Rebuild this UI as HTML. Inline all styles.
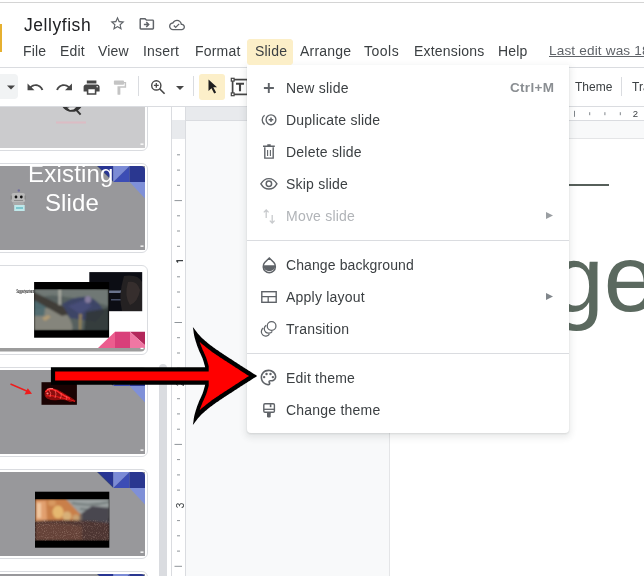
<!DOCTYPE html>
<html><head><meta charset="utf-8">
<style>
*{margin:0;padding:0;box-sizing:border-box}
html,body{width:644px;height:576px;overflow:hidden;background:#fff;font-family:"Liberation Sans",sans-serif;color:#3c4043;position:relative}
.a{position:absolute}
.t{position:absolute;white-space:nowrap;line-height:1;will-change:transform}
svg{position:absolute;overflow:visible}
.mb{font-size:14px;color:#3c4043;top:44.2px;letter-spacing:.2px}
.mi{font-size:14px;color:#3c4043;left:286px;letter-spacing:.22px}
.thumb{position:absolute;left:-3px;width:148px;height:84px;overflow:hidden}
.tb{position:absolute;left:-6px;width:154px;height:90px;border:1px solid #dadce0;border-radius:6px;background:#fff}
</style></head><body>
<!-- top chrome -->
<div class="a" style="left:0;top:2px;width:644px;height:1px;background:#d4d4d4"></div>
<div class="a" style="left:0;top:24px;width:2px;height:28px;background:#e6b030"></div>
<div class="t" style="left:24px;top:17px;font-size:17.5px;color:#202124;letter-spacing:.55px">Jellyfish</div>
<!-- star -->
<svg style="left:108.7px;top:15.4px" width="17" height="17" viewBox="0 0 24 24"><path fill="#5f6368" d="M22 9.24l-7.19-.62L12 2 9.19 8.63 2 9.24l5.46 4.73L5.82 21 12 17.270 18.18 21l-1.63-7.03L22 9.24zM12 15.4l-3.76 2.27 1-4.28-3.32-2.88 4.38-.38L12 6.1l1.71 4.04 4.38.38-3.32 2.88 1 4.28L12 15.4z"/></svg>
<!-- folder -->
<svg style="left:137.7px;top:15.2px" width="17.6" height="17.6" viewBox="0 0 24 24"><path fill="#5f6368" d="M20 6h-8l-2-2H4c-1.1 0-1.99.9-1.99 2L2 18c0 1.1.9 2 2 2h16c1.1 0 2-.9 2-2V8c0-1.1-.9-2-2-2zm0 12H4V6h5.17l2 2H20v10zm-7.84-6H8v2h4.16l-1.59 1.590L11.99 17 16 13.01 11.99 9l-1.42 1.41L12.16 12z"/></svg>
<!-- cloud -->
<svg style="left:168.9px;top:16.6px" width="16" height="16" viewBox="0 0 24 24"><path fill="#5f6368" d="M19.35 10.04C18.67 6.59 15.64 4 12 4 9.11 4 6.6 5.64 5.350 8.04 2.34 8.36 0 10.91 0 14c0 3.31 2.69 6 6 6h13c2.76 0 5-2.24 5-5 0-2.64-2.05-4.78-4.65-4.960zM19 18H6c-2.21 0-4-1.79-4-4 0-2.05 1.53-3.76 3.56-3.97l1.07-.11.5-.95C8.08 7.14 9.94 6 12 6c2.62 0 4.88 1.86 5.39 4.43l.3 1.5 1.53.11c1.56.1 2.78 1.41 2.78 2.96 0 1.65-1.35 3-3 3zm-9-3.82l-2.09-2.09L6.5 13.5 10 17l6.01-6.01-1.41-1.41z"/></svg>

<!-- menubar -->
<div class="a" style="left:247px;top:38.5px;width:46px;height:26px;background:#fcefc8;border-radius:4px"></div>
<div class="t mb" style="left:23px">File</div>
<div class="t mb" style="left:60px">Edit</div>
<div class="t mb" style="left:98px">View</div>
<div class="t mb" style="left:142.5px">Insert</div>
<div class="t mb" style="left:195px">Format</div>
<div class="t mb" style="left:254.5px">Slide</div>
<div class="t mb" style="left:300px">Arrange</div>
<div class="t mb" style="left:364px;letter-spacing:.5px">Tools</div>
<div class="t mb" style="left:414px">Extensions</div>
<div class="t mb" style="left:498px">Help</div>
<div class="t mb" style="left:548.5px;top:44px;font-size:13.6px;letter-spacing:.15px;color:#5f6368;text-decoration:underline;text-underline-offset:1px">Last edit was 18</div>
<div class="a" style="left:0;top:67px;width:644px;height:1px;background:#dadce0"></div>

<!-- toolbar -->
<div class="a" style="left:-10px;top:74px;width:28px;height:25px;background:#f1f3f4;border-radius:4px"></div>
<svg style="left:7px;top:85px" width="8" height="5" viewBox="0 0 10 5"><path fill="#444" d="M0 0h10L5 5z"/></svg>
<svg style="left:26.4px;top:77.6px" width="18.5" height="18.5" viewBox="0 0 24 24"><path fill="#474747" d="M12.5 8c-2.65 0-5.05.99-6.9 2.6L2 7v9h9l-3.62-3.62c1.39-1.16 3.16-1.88 5.12-1.88 3.54 0 6.55 2.31 7.6 5.5l2.37-.78C21.08 11.03 17.15 8 12.5 8z"/></svg>
<svg style="left:55.1px;top:77.6px" width="18.5" height="18.5" viewBox="0 0 24 24"><path fill="#474747" d="M18.4 10.6C16.55 8.99 14.15 8 11.5 8c-4.65 0-8.580 3.03-9.96 7.22L3.9 16c1.05-3.19 4.05-5.5 7.6-5.5 1.95 0 3.73.72 5.12 1.88L13 16h9V7l-3.6 3.6z"/></svg>
<svg style="left:82.3px;top:77.5px" width="19.2" height="19.2" viewBox="0 0 24 24"><path fill="#474747" d="M19 8H5c-1.66 0-3 1.34-3 3v6h4v4h12v-4h4v-6c0-1.66-1.34-3-3-3zm-3 11H8v-5h8v5zm3-7c-.55 0-1-.45-1-1s.45-1 1-1 1 .45 1 1-.45 1-1 1zm-1-9H6v4h12V3z"/></svg>
<svg style="left:111px;top:78.5px" width="17.3" height="17.3" viewBox="0 0 24 24"><path fill="#c4c4c4" d="M18 4V3c0-.55-.45-1-1-1H5c-.55 0-1 .45-1 1v4c0 .55.45 1 1 1h12c.55 0 1-.45 1-1V6h1v4H9v11c0 .55.45 1 1 1h2c.55 0 1-.45 1-1v-9h8V4h-3z"/></svg>
<div class="a" style="left:138px;top:76px;width:1px;height:20px;background:#dadce0"></div>
<svg style="left:148px;top:77px" width="20" height="20" viewBox="0 0 20 20"><circle cx="8.3" cy="8.4" r="4.6" fill="none" stroke="#474747" stroke-width="1.4"/><path d="M11.6 11.7l5 5" stroke="#474747" stroke-width="1.6"/><path d="M8.3 6v4.8M5.9 8.4h4.8" stroke="#474747" stroke-width="1.3"/></svg>
<svg style="left:176px;top:86px" width="8" height="4" viewBox="0 0 10 5"><path fill="#474747" d="M0 0h10L5 5z"/></svg>
<div class="a" style="left:193px;top:76px;width:1px;height:20px;background:#dadce0"></div>
<div class="a" style="left:199px;top:74px;width:25.5px;height:26px;background:#fcefc9;border-radius:3px"></div>
<svg style="left:207.5px;top:79px" width="10" height="15" viewBox="0 0 10 15"><path fill="#1f1f1f" d="M0.5 0.5L9 8.3H5.3l2.8 5.2-1.9 1-2.7-5.3L0.5 12z"/></svg>
<svg style="left:231px;top:78px" width="18" height="18" viewBox="0 0 18 18"><rect x="1.6" y="1.6" width="15" height="14.8" fill="none" stroke="#444" stroke-width="1.7"/><rect x="0.3" y="0.3" width="2.8" height="2.8" fill="#fff" stroke="#444" stroke-width="1.2"/><rect x="0.3" y="14.9" width="2.8" height="2.8" fill="#fff" stroke="#444" stroke-width="1.2"/><path d="M5 5.8h8M9 5.8v7.4" stroke="#444" stroke-width="2.1"/></svg>
<div class="t" style="left:574.5px;top:81px;font-size:12px;color:#3c4043">Theme</div>
<div class="a" style="left:621px;top:77px;width:1px;height:19px;background:#dadce0"></div>
<div class="t" style="left:632px;top:81px;font-size:12px;color:#3c4043">Transition</div>
<div class="a" style="left:0;top:106px;width:644px;height:1px;background:#dadce0"></div>

<!-- ruler + canvas -->
<div class="a" style="left:185px;top:107px;width:459px;height:469px;background:#f8f9fa"></div>
<div class="a" style="left:185px;top:107px;width:459px;height:14px;background:#e8eaed"></div>
<div class="a" style="left:390px;top:107px;width:254px;height:14px;background:#fff"></div>
<div class="a" style="left:185px;top:120px;width:459px;height:1px;background:#dadce0"></div>
<div class="a" style="left:390px;top:139px;width:254px;height:437px;background:#fff"></div>
<div class="a" style="left:389px;top:139px;width:1px;height:437px;background:#e4e5e7"></div>
<div class="a" style="left:389px;top:138px;width:255px;height:1px;background:#e4e5e7"></div>
<!-- vertical ruler -->
<div class="a" style="left:171px;top:107px;width:1px;height:469px;background:#dadce0"></div>
<div class="a" style="left:185px;top:107px;width:1px;height:469px;background:#dadce0"></div>
<div class="a" style="left:172px;top:107px;width:13px;height:13px;background:#fff"></div>
<div class="a" style="left:172px;top:120px;width:13px;height:19px;background:#e8eaed"></div>
<div class="a" style="left:172px;top:139px;width:13px;height:437px;background:#fff"></div>
<svg style="left:0;top:0" width="644" height="576" viewBox="0 0 644 576"><rect x="177" y="154.3" width="3" height="1" fill="#8f959a"/><rect x="177" y="169.6" width="3" height="1" fill="#8f959a"/><rect x="177" y="184.8" width="3" height="1" fill="#8f959a"/><rect x="174.5" y="200.1" width="7.5" height="1" fill="#8f959a"/><rect x="177" y="215.3" width="3" height="1" fill="#8f959a"/><rect x="177" y="230.5" width="3" height="1" fill="#8f959a"/><rect x="177" y="245.8" width="3" height="1" fill="#8f959a"/><path d="M176.3 260.6H183M176.5 260.6L178 262.5" stroke="#3c4043" stroke-width="1.25" fill="none"/><rect x="177" y="276.3" width="3" height="1" fill="#8f959a"/><rect x="177" y="291.5" width="3" height="1" fill="#8f959a"/><rect x="177" y="306.7" width="3" height="1" fill="#8f959a"/><rect x="174.5" y="322.0" width="7.5" height="1" fill="#8f959a"/><rect x="177" y="337.2" width="3" height="1" fill="#8f959a"/><rect x="177" y="352.5" width="3" height="1" fill="#8f959a"/><rect x="177" y="367.7" width="3" height="1" fill="#8f959a"/><text x="0" y="0" font-family="Liberation Sans" font-size="10" fill="#3c4043" transform="translate(183.9,383.4) rotate(-90)" text-anchor="middle">2</text><rect x="177" y="398.2" width="3" height="1" fill="#8f959a"/><rect x="177" y="413.4" width="3" height="1" fill="#8f959a"/><rect x="177" y="428.7" width="3" height="1" fill="#8f959a"/><rect x="174.5" y="443.9" width="7.5" height="1" fill="#8f959a"/><rect x="177" y="459.1" width="3" height="1" fill="#8f959a"/><rect x="177" y="474.4" width="3" height="1" fill="#8f959a"/><rect x="177" y="489.6" width="3" height="1" fill="#8f959a"/><text x="0" y="0" font-family="Liberation Sans" font-size="10" fill="#3c4043" transform="translate(183.9,505.4) rotate(-90)" text-anchor="middle">3</text><rect x="177" y="520.1" width="3" height="1" fill="#8f959a"/><rect x="177" y="535.3" width="3" height="1" fill="#8f959a"/><rect x="177" y="550.6" width="3" height="1" fill="#8f959a"/><rect x="174.5" y="565.8" width="7.5" height="1" fill="#8f959a"/><rect x="574" y="110.8" width="1" height="6" fill="#80868b"/><rect x="589.2" y="112.2" width="1" height="3" fill="#80868b"/><rect x="604.4" y="112.2" width="1" height="3" fill="#80868b"/><rect x="619.8" y="112.2" width="1" height="3" fill="#80868b"/><text x="635.5" y="117" font-family="Liberation Sans" font-size="9.5" fill="#3c4043" text-anchor="middle">2</text></svg>

<!-- slide content -->
<div class="a" style="left:560px;top:184px;width:48.5px;height:2px;background:#565f5a"></div>
<div class="t" style="left:551px;top:231px;font-size:95px;line-height:1;color:#5b695f">ge</div>

<!-- filmstrip -->
<div class="a" style="left:0;top:107px;width:171px;height:469px;overflow:hidden">
<div class="tb" style="top:-46px"></div>
<div class="thumb" style="top:-43px;background:#cbcbcd"></div>
<div class="tb" style="top:56px"></div>
<div class="thumb" style="top:59px;background:#98989b"></div>
<div class="tb" style="top:158px"></div>
<div class="thumb" style="top:161px;background:#fff"></div>
<div class="tb" style="top:260px"></div>
<div class="thumb" style="top:263px;background:#98989b"></div>
<div class="tb" style="top:362px"></div>
<div class="thumb" style="top:365px;background:#98989b"></div>
<div class="tb" style="top:464px"></div>
<div class="thumb" style="top:467px;background:#98989b"></div>
<div class="a" style="left:159px;top:257px;width:8px;height:230px;background:#dadce0;border-radius:4px"></div>
<svg style="left:0;top:0" width="171" height="469" viewBox="0 107 171 469">
<defs>
<clipPath id="c1"><rect x="-3" y="64" width="148" height="83.5" rx="4"/><rect x="-3" y="166" width="148" height="83.5" rx="4"/><rect x="-3" y="268" width="148" height="83.5" rx="4"/><rect x="-3" y="370" width="148" height="83.5" rx="4"/><rect x="-3" y="472" width="148" height="83.5" rx="4"/><rect x="-3" y="574" width="148" height="83.5" rx="4"/></clipPath>
<linearGradient id="th" x1="0" y1="0" x2="1" y2="1"><stop offset="0" stop-color="#5d6a66"/><stop offset=".35" stop-color="#4a5560"/><stop offset=".6" stop-color="#3f4666"/><stop offset="1" stop-color="#3b3a33"/></linearGradient>
<linearGradient id="bt" x1="0" y1="0" x2="1" y2="0"><stop offset="0" stop-color="#c98a5a"/><stop offset=".3" stop-color="#b97a4f"/><stop offset=".55" stop-color="#75685e"/><stop offset="1" stop-color="#6d6e70"/></linearGradient>
<linearGradient id="bt2" x1="0" y1="0" x2="0" y2="1"><stop offset="0" stop-color="#000" stop-opacity="0"/><stop offset=".45" stop-color="#000" stop-opacity="0"/><stop offset=".6" stop-color="#3a2a22" stop-opacity=".8"/><stop offset="1" stop-color="#2a1e1a" stop-opacity=".95"/></linearGradient>
<filter id="bl" x="-10%" y="-10%" width="120%" height="120%"><feGaussianBlur stdDeviation="0.9"/></filter><filter id="bl2" x="-20%" y="-20%" width="140%" height="140%"><feGaussianBlur stdDeviation="0.5"/></filter><filter id="noise" x="0" y="0" width="100%" height="100%"><feTurbulence type="fractalNoise" baseFrequency="0.9" numOctaves="2" seed="3"/><feColorMatrix values="0 0 0 0 0.85  0 0 0 0 0.65  0 0 0 0 0.55  0 0 0 2.2 -1.1"/></filter></defs>
<g clip-path="url(#c1)">
<!-- thumb1 -->
<circle cx="72" cy="100.3" r="9.8" fill="none" stroke="#353535" stroke-width="3.4"/><path d="M67 107.5Q71 108.5 76 107.5 74 110 70 110Z" fill="#e8e8e8"/><path d="M75.5 109L80.6 114.6" stroke="#333" stroke-width="1.9"/>
<rect x="56" y="121.5" width="30" height="2" fill="#dcbcc4"/>
<!-- thumb2 -->
<path fill="#3a4a74" d="M97 166H113.3V182Z"/><path fill="#283593" d="M98 166H113.3V181Z"/>
<path fill="#7b8bd6" d="M113.3 166H129.6L113.3 182Z"/><path fill="#3c4db5" d="M129.6 166V182H113.3Z"/>
<rect fill="#2a3790" x="129.6" y="166" width="20" height="16"/>
<path fill="#7f90d8" d="M129.6 182H150V204Z"/>
<text x="28" y="182" font-family="Liberation Sans" font-size="24" fill="#fff" letter-spacing=".2">Existing</text>
<text x="45" y="211.2" font-family="Liberation Sans" font-size="24" fill="#fff" letter-spacing=".1">Slide</text>
<rect x="18.3" y="189" width="1" height="3" fill="#9a9aa8"/><circle cx="18.8" cy="190.5" r="1.2" fill="#6f6c9a"/>
<rect x="11.5" y="193" width="13.5" height="9.5" rx="2" fill="#b9b9b9"/>
<rect x="10.5" y="195.5" width="1.5" height="4" fill="#8a8a8a"/><rect x="24.5" y="195.5" width="1.5" height="4" fill="#8a8a8a"/>
<circle cx="16" cy="197" r="1.4" fill="#111"/><circle cx="21.3" cy="197" r="1.4" fill="#111"/>
<rect x="14" y="200" width="9" height="1" fill="#8d8d8d"/>
<rect x="13" y="203" width="11" height="2" fill="#aaa"/>
<rect x="14.2" y="205" width="10.5" height="6" fill="#bfe8ea"/><rect x="16" y="207" width="7" height="2" fill="#7ec7cf"/>
<!-- thumb3 -->
<rect x="89.3" y="272.1" width="52.9" height="39.1" fill="#0c0d14"/>
<path fill="#8a95b5" d="M108 290.5h12l6-2 1 1.5-7 3H108z" opacity=".75"/>
<path fill="#56607c" d="M111 299h10v1.5h-10z" opacity=".8"/>
<path d="M124 276Q138 274 142 282V311H122Q118 296 124 276Z" fill="#242122"/>
<path d="M128 282Q137 280 140 290 138 302 130 305Q124 296 128 282Z" fill="#3e3532" opacity=".7"/>
<rect x="34.1" y="282" width="75" height="55.7" fill="#000"/>
<clipPath id="tc"><rect x="34.1" y="289" width="74.5" height="41.6"/></clipPath><g clip-path="url(#tc)"><g filter="url(#bl)"><rect x="34.1" y="289" width="74.5" height="41.6" fill="#56615f"/>
<path d="M34.1 289H108.6V306Q90 300 60 296 45 294 34.1 300Z" fill="#737c78" opacity=".85"/>
<path d="M34.1 310Q50 304 68 316 74 325 72 330.6H34.1Z" fill="#8b8a7e" opacity=".9"/>
<path d="M34.1 300Q40 298 46 303L44 316 34.1 316Z" fill="#4c6a70" opacity=".9"/>
<path d="M34.1 292L66 308 70 314 62 316 34.1 300Z" fill="#413c38"/>
<rect x="58.5" y="289" width="2.5" height="16" fill="#b8b6ad" opacity=".8"/>
<path d="M62 304Q75 295 90 297 100 302 104 312L96 322 70 318Z" fill="#3e4566"/>
<path d="M68 306L84 300 92 306 80 314Z" fill="#4b5180" opacity=".7"/>
<ellipse cx="88" cy="299.5" rx="3.2" ry="3.5" fill="#857c9e"/>
<path d="M86 312L108.6 308V330.6H84Z" fill="#2e3533" opacity=".8"/>
<path d="M79 314l3 0 -1 16h-2z" fill="#a58d58" opacity=".8"/>
<path d="M42 318l6-3 3 2-6 4z" fill="#c5a470" opacity=".7"/>
</g></g>
<text x="16.5" y="293.2" font-family="Liberation Sans" font-size="4.6" font-weight="bold" fill="#111" textLength="17.5" lengthAdjust="spacingAndGlyphs">Suggestyourteam</text>
<path fill="#ec5d8e" d="M98 348L115 331.7V348Z"/>
<rect x="115" y="331.7" width="15" height="16.3" fill="#d9407a"/>
<path fill="#b2275a" d="M130 331.7H148V348Z"/><path fill="#ef77a3" d="M130 331.7L148 348H130Z"/>
<rect x="-3" y="348" width="151" height="5" fill="#9c9c9c"/>
<!-- thumb4 -->
<path fill="#3a4a74" d="M97 370H113.3V386Z"/><path fill="#283593" d="M98 370H113.3V385Z"/>
<path fill="#7b8bd6" d="M113.3 370H129.6L113.3 386Z"/><path fill="#3c4db5" d="M129.6 370V386H113.3Z"/>
<rect fill="#2a3790" x="129.6" y="370" width="20" height="16"/>
<path fill="#7f90d8" d="M129.6 386H150V408Z"/>
<rect x="41.5" y="382.2" width="35.4" height="22.6" fill="#1a0303"/>
<g filter="url(#bl2)">
<path d="M44.5 393Q46 387 52 388Q58 389 62 392Q67 395 72 398L76 401 70 402Q64 399 58 400Q52 401 48 399Q44 397 44.5 393Z" fill="#8a0a0a"/>
<path d="M45.5 392Q48 388.5 53 389.5Q57 390.5 60 393Q64 396 70 398.5" stroke="#ff2a2a" stroke-width="1.6" fill="none"/>
<path d="M46 396Q51 395 56 396.5Q62 398 67 399Q72 400 75 401.5" stroke="#e61a1a" stroke-width="1.1" fill="none"/>
<path d="M49 390Q52 393 50 397M55 390Q57 394 55 398M61 393Q62 396 60 399M66 396Q68 398 66 400" stroke="#ff5a5a" stroke-width=".8" fill="none"/>
<path d="M47 389.5Q50 388 53 388.5" stroke="#ff9090" stroke-width=".8" fill="none"/>
<circle cx="47.5" cy="393.5" r="1.1" fill="#ff8080"/>
</g>
<path d="M10.5 384L29 392" stroke="#ee1c1c" stroke-width="1.4"/><path d="M32 393.8L24.5 394.5 27.8 388.3Z" fill="#ee1c1c"/>
<!-- thumb5 -->
<path fill="#3a4a74" d="M97 472H113.3V488Z"/><path fill="#283593" d="M98 472H113.3V487Z"/>
<path fill="#7b8bd6" d="M113.3 472H129.6L113.3 488Z"/><path fill="#3c4db5" d="M129.6 472V488H113.3Z"/>
<rect fill="#2a3790" x="129.6" y="472" width="20" height="16"/>
<path fill="#7f90d8" d="M129.6 488H150V510Z"/>
<rect x="35" y="491.7" width="74.3" height="56" fill="#000"/>
<clipPath id="bc"><rect x="35" y="499" width="74.3" height="41.8"/></clipPath>
<g clip-path="url(#bc)"><g filter="url(#bl)">
<rect x="35" y="499" width="74.3" height="41.8" fill="#7a6a60"/>
<path d="M60 499H109.3V518Q90 512 65 514Z" fill="#9aa0a0"/>
<path d="M72 503Q90 507 109 502M80 509Q95 511 109 508" stroke="#66706f" stroke-width="1.6" fill="none"/>
<path d="M35 499H66L80 514 76 524H35Z" fill="#c97f4a"/>
<path d="M36 501H46L47 522H36Z" fill="#e2a070"/>
<rect x="37" y="503" width="4" height="15" fill="#f0c8a0"/>
<ellipse cx="58" cy="512" rx="5.5" ry="6.5" fill="#e6b870"/>
<ellipse cx="52" cy="503" rx="4" ry="3" fill="#d89860"/>
<ellipse cx="67" cy="516" rx="4.5" ry="4.5" fill="#d8b078"/>
<ellipse cx="76" cy="518" rx="3.5" ry="3.5" fill="#c9a070"/>
<path d="M82 513L92 506 109.3 508V524H82Z" fill="#4a4750"/>
<path d="M35 521Q70 518 109.3 523V540.8H35Z" fill="#4e3631"/>
<path d="M35 524Q60 521 82 526V540.8H35Z" fill="#654338"/>
</g>
<rect x="35" y="520" width="74.3" height="20.8" filter="url(#noise)" opacity=".35"/>
</g>
<!-- thumb6 -->
<path fill="#3a4a74" d="M97 574H113.3V590Z"/><path fill="#283593" d="M98 574H113.3V589Z"/>
<path fill="#7b8bd6" d="M113.3 574H129.6L113.3 590Z"/><path fill="#3c4db5" d="M129.6 574V590H113.3Z"/>
<rect fill="#2a3790" x="129.6" y="574" width="20" height="16"/>
<path fill="#7f90d8" d="M129.6 590H150V612Z"/>
</g>
<rect x="140.5" y="245.5" width="3" height="1.3" fill="#fff"/><rect x="140.5" y="449.5" width="3" height="1.3" fill="#fff"/><rect x="140.5" y="551.5" width="3" height="1.3" fill="#fff"/><rect x="140.5" y="143.5" width="3" height="1.3" fill="#fff"/><rect x="140.5" y="347.8" width="3" height="1.3" fill="#fff"/>
</svg>
</div>

<!-- menu -->
<div class="a" style="left:247px;top:65px;width:322px;height:368px;background:#fff;border-radius:0 0 4px 4px;box-shadow:0 3px 6px 2px rgba(60,64,67,.10),0 1px 2px rgba(60,64,67,.12)"></div>
<div class="a" style="left:247px;top:38.5px;width:46px;height:26px;background:#fcefc8;border-radius:4px"></div>
<div class="t mb" style="left:254.5px">Slide</div>
<div class="t mi" style="top:80.5px">New slide</div>
<div class="t" style="left:509.5px;top:81px;font-size:13.5px;font-weight:bold;color:#8a8e92;letter-spacing:.3px">Ctrl+M</div>
<div class="t mi" style="top:112.5px">Duplicate slide</div>
<div class="t mi" style="top:144.5px">Delete slide</div>
<div class="t mi" style="top:176.5px">Skip slide</div>
<div class="t mi" style="top:208.5px;color:#b1b4b8">Move slide</div>
<svg style="left:546px;top:212px" width="7" height="7" viewBox="0 0 7 7"><path fill="#9a9ea2" d="M0 0L7 3.5 0 7z"/></svg>
<div class="a" style="left:247px;top:240px;width:322px;height:1px;background:#dadce0"></div>
<div class="t mi" style="top:257.5px;letter-spacing:.1px">Change background</div>
<div class="t mi" style="top:289.5px">Apply layout</div>
<svg style="left:546px;top:293px" width="7" height="7" viewBox="0 0 7 7"><path fill="#80868b" d="M0 0L7 3.5 0 7z"/></svg>
<div class="t mi" style="top:321.5px">Transition</div>
<div class="a" style="left:247px;top:353px;width:322px;height:1px;background:#dadce0"></div>
<div class="t mi" style="top:370.5px">Edit theme</div>
<div class="t mi" style="top:402.5px">Change theme</div>
<svg style="left:0;top:0" width="644" height="576" viewBox="0 0 644 576">
<g fill="none" stroke="#5f6368" stroke-width="1.5">
<path d="M263.9 88h10M268.8 83v10" stroke-width="1.9"/>
<circle cx="271" cy="119.8" r="4.9" stroke-width="1.35"/>
<path d="M271 117.5v4.6M268.7 119.8h4.6" stroke-width="1.5"/>
<path d="M264.6 115.2A5.8 5.8 0 0 0 264.6 124.6" stroke-width="1.3"/>
<path d="M263 146.3h11.8M267.3 145h3.4" stroke-width="1.5"/>
<path d="M264.8 147.2v10.9h8.4v-10.9" stroke-width="1.4"/>
<path d="M267.6 150v6M270.4 150v6" stroke-width="1.1"/>
<path d="M260.9 183.8C263.2 179.8 265.8 178.6 268.9 178.6C272 178.6 274.6 179.8 276.9 183.8C274.6 187.8 272 189 268.9 189C265.8 189 263.2 187.8 260.9 183.8Z" stroke-width="1.45"/>
<circle cx="268.9" cy="183.8" r="2.7" stroke-width="1.5"/>
<path d="M262 257.9L264.3 262.6" stroke="none"/>
<path d="M269.3 258L264.7 262.6A6.1 6.1 0 1 0 273.9 262.6Z" stroke-width="1.45"/>
<path d="M263.3 265.2H275.3A6 6 0 0 1 263.3 265.2Z" fill="#5f6368" stroke="none"/>
<rect x="261.8" y="291.7" width="14.4" height="10.6" stroke-width="1.4"/>
<path d="M261.8 296.6h14.4M268.2 296.6v5.7" stroke-width="1.3"/>
<circle cx="271.6" cy="325.9" r="4.35" stroke-width="1.25"/>
<path d="M266.18 325.2A4.4 4.4 0 1 0 272.3 331.3" stroke-width="1.25"/>
<path d="M263.28 328.1A4.4 4.4 0 1 0 269.4 334.2" stroke-width="1.25"/>
<rect x="263.8" y="403.7" width="10.6" height="8.5" rx="1.2" stroke-width="1.4"/>
<path d="M263.8 409.3h10.6" stroke-width="1.3"/>
<path d="M270.6 404.2v3" stroke-width="1.6"/>
</g>
<g fill="#5f6368">
<rect x="267" y="412" width="3.7" height="5.6" rx="1.3"/>
</g>
<g fill="none" stroke="#c8cacd" stroke-width="1.3">
<path d="M266.2 210v8M263.8 212.4l2.4-2.4 2.4 2.4M272.2 215v8M269.8 220.6l2.4 2.4 2.4-2.4"/>
</g>
</svg>
<svg style="left:259.4px;top:368.3px" width="19" height="19" viewBox="0 0 24 24"><path fill="#5f6368" d="M12 22C6.49 22 2 17.51 2 12S6.49 2 12 2s10 4.04 10 9c0 3.31-2.69 6-6 6h-1.770c-.28 0-.5.22-.5.5 0 .12.05.23.13.33.41.47.64 1.06.64 1.67 0 1.38-1.12 2.5-2.5 2.5zm0-18c-4.41 0-8 3.59-8 8s3.59 8 8 8c.28 0 .5-.22.5-.5 0-.16-.08-.28-.14-.35-.41-.46-.63-1.05-.63-1.65 0-1.38 1.12-2.5 2.5-2.5H16c2.21 0 4-1.79 4-4 0-3.86-3.59-7-8-7z"/><circle fill="#5f6368" cx="6.5" cy="11.5" r="1.5"/><circle fill="#5f6368" cx="9.5" cy="7.5" r="1.5"/><circle fill="#5f6368" cx="14.5" cy="7.5" r="1.5"/><circle fill="#5f6368" cx="17.5" cy="11.5" r="1.5"/></svg>
<svg style="left:0;top:0" width="644" height="576" viewBox="0 0 644 576"><path d="M50.9 367.2 L205.2 367.2 L205.0 366.5 L204.8 365.8 L204.6 365.1 L204.4 364.4 L204.2 363.7 L204.0 363.0 L203.8 362.3 L203.6 361.6 L203.4 360.9 L203.2 360.2 L202.9 359.4 L202.6 358.6 L202.3 357.8 L201.9 356.9 L201.5 356.0 L201.1 355.1 L200.7 354.2 L200.3 353.3 L199.9 352.4 L199.4 351.4 L199.0 350.5 L198.6 349.5 L198.3 348.6 L197.9 347.7 L197.6 346.8 L197.2 345.9 L196.9 345.0 L196.6 344.1 L196.3 343.1 L196.0 342.2 L195.7 341.3 L195.5 340.4 L195.2 339.5 L194.9 338.6 L194.7 337.8 L194.5 336.9 L194.3 336.0 L194.1 335.2 L194.0 334.4 L193.8 333.6 L193.7 332.7 L193.6 331.9 L193.5 331.1 L193.4 330.3 L193.3 329.5 L193.1 328.7 L193.0 327.9 L192.9 327.1 L193.6 327.9 L194.2 328.7 L194.8 329.6 L195.5 330.4 L196.1 331.2 L196.7 332.0 L197.4 332.9 L198.0 333.7 L198.7 334.5 L199.4 335.3 L200.1 336.1 L200.9 336.9 L201.7 337.7 L202.5 338.5 L203.4 339.3 L204.3 340.1 L205.2 340.9 L206.1 341.6 L207.1 342.4 L208.0 343.2 L208.9 343.9 L209.9 344.7 L210.8 345.4 L211.7 346.1 L212.6 346.8 L213.5 347.5 L214.4 348.1 L215.3 348.8 L216.2 349.4 L217.1 350.0 L218.1 350.6 L219.0 351.3 L219.9 351.9 L220.8 352.5 L221.7 353.1 L222.6 353.7 L223.5 354.3 L224.4 354.9 L225.3 355.5 L226.2 356.1 L227.1 356.7 L228.1 357.3 L229.0 357.9 L229.9 358.5 L230.8 359.0 L231.7 359.6 L232.6 360.2 L233.5 360.8 L234.4 361.4 L235.3 362.0 L236.2 362.5 L237.0 363.1 L237.9 363.7 L238.8 364.2 L239.7 364.8 L240.5 365.4 L241.5 366.0 L242.4 366.6 L243.3 367.2 L244.3 367.8 L245.3 368.4 L246.3 369.1 L247.4 369.8 L248.4 370.4 L249.5 371.1 L250.6 371.8 L251.7 372.5 L252.8 373.2 L253.9 373.9 L255.0 374.6 L256.1 375.3 L257.2 376.0 L256.1 376.7 L255.0 377.4 L253.9 378.1 L252.8 378.8 L251.7 379.5 L250.6 380.2 L249.5 380.9 L248.4 381.6 L247.4 382.2 L246.3 382.9 L245.3 383.6 L244.3 384.2 L243.3 384.8 L242.4 385.4 L241.5 386.0 L240.5 386.6 L239.7 387.2 L238.8 387.8 L237.9 388.3 L237.0 388.9 L236.2 389.5 L235.3 390.0 L234.4 390.6 L233.5 391.2 L232.6 391.8 L231.7 392.4 L230.8 393.0 L229.9 393.5 L229.0 394.1 L228.1 394.7 L227.1 395.3 L226.2 395.9 L225.3 396.5 L224.4 397.1 L223.5 397.7 L222.6 398.3 L221.7 398.9 L220.8 399.5 L219.9 400.1 L219.0 400.7 L218.1 401.4 L217.1 402.0 L216.2 402.6 L215.3 403.2 L214.4 403.9 L213.5 404.5 L212.6 405.2 L211.7 405.9 L210.8 406.6 L209.9 407.3 L208.9 408.1 L208.0 408.8 L207.1 409.6 L206.1 410.4 L205.2 411.1 L204.3 411.9 L203.4 412.7 L202.5 413.5 L201.7 414.3 L200.9 415.1 L200.1 415.9 L199.4 416.7 L198.7 417.5 L198.0 418.3 L197.4 419.1 L196.7 420.0 L196.1 420.8 L195.5 421.6 L194.8 422.4 L194.2 423.3 L193.6 424.1 L192.9 424.9 L193.0 424.1 L193.1 423.3 L193.3 422.5 L193.4 421.7 L193.5 420.9 L193.6 420.1 L193.7 419.3 L193.8 418.4 L194.0 417.6 L194.1 416.8 L194.3 416.0 L194.5 415.1 L194.7 414.2 L194.9 413.4 L195.2 412.5 L195.5 411.6 L195.7 410.7 L196.0 409.8 L196.3 408.9 L196.6 407.9 L196.9 407.0 L197.2 406.1 L197.6 405.2 L197.9 404.3 L198.3 403.4 L198.6 402.5 L199.0 401.5 L199.4 400.6 L199.9 399.6 L200.3 398.7 L200.7 397.8 L201.1 396.9 L201.5 396.0 L201.9 395.1 L202.3 394.2 L202.6 393.4 L202.9 392.6 L203.2 391.8 L203.4 391.1 L203.6 390.4 L203.8 389.7 L204.0 389.0 L204.2 388.3 L204.4 387.6 L204.6 386.9 L204.8 386.2 L205.0 385.5 L205.2 384.8 L50.9 384.8Z" fill="#000"/><path d="M55.1 371.4 L208.7 371.4 L208.7 366.2 L208.5 365.5 L208.3 364.8 L208.1 364.1 L207.9 363.5 L207.7 362.8 L207.5 362.1 L207.3 361.3 L207.1 360.6 L206.8 359.8 L206.6 359.0 L206.3 358.2 L206.0 357.3 L205.6 356.4 L205.2 355.5 L204.8 354.6 L204.4 353.7 L204.0 352.7 L203.6 351.8 L203.2 350.9 L202.7 349.9 L202.3 349.0 L202.0 348.1 L201.6 347.3 L201.3 346.4 L201.0 345.6 L200.6 344.7 L200.3 343.8 L200.0 342.9 L199.7 342.0 L200.4 342.6 L201.4 343.4 L202.3 344.2 L203.3 345.0 L204.3 345.8 L205.2 346.6 L206.2 347.4 L207.1 348.1 L208.1 348.9 L209.0 349.6 L210.0 350.3 L210.9 351.0 L211.8 351.7 L212.8 352.4 L213.7 353.0 L214.7 353.7 L215.6 354.3 L216.5 354.9 L217.4 355.5 L218.3 356.1 L219.2 356.8 L220.1 357.4 L221.1 358.0 L222.0 358.6 L222.9 359.2 L223.8 359.8 L224.7 360.4 L225.7 361.0 L226.6 361.6 L227.5 362.2 L228.4 362.8 L229.3 363.3 L230.2 363.9 L231.1 364.5 L232.0 365.1 L232.9 365.7 L233.8 366.2 L234.6 366.8 L235.5 367.4 L236.4 367.9 L237.3 368.5 L238.2 369.1 L239.1 369.7 L240.0 370.3 L240.9 370.9 L241.9 371.5 L242.9 372.2 L244.0 372.8 L245.0 373.5 L246.1 374.2 L247.2 374.9 L248.3 375.5 L249.0 376.0 L249.0 376.0 L248.3 376.5 L247.2 377.1 L246.1 377.8 L245.0 378.5 L244.0 379.2 L242.9 379.8 L241.9 380.5 L240.9 381.1 L240.0 381.7 L239.1 382.3 L238.2 382.9 L237.3 383.5 L236.4 384.1 L235.5 384.6 L234.6 385.2 L233.8 385.8 L232.9 386.3 L232.0 386.9 L231.1 387.5 L230.2 388.1 L229.3 388.7 L228.4 389.2 L227.5 389.8 L226.6 390.4 L225.7 391.0 L224.7 391.6 L223.8 392.2 L222.9 392.8 L222.0 393.4 L221.1 394.0 L220.1 394.6 L219.2 395.2 L218.3 395.9 L217.4 396.5 L216.5 397.1 L215.6 397.7 L214.7 398.3 L213.7 399.0 L212.8 399.6 L211.8 400.3 L210.9 401.0 L210.0 401.7 L209.0 402.4 L208.1 403.1 L207.1 403.9 L206.2 404.6 L205.2 405.4 L204.3 406.2 L203.3 407.0 L202.3 407.8 L201.4 408.6 L200.4 409.4 L199.7 410.0 L200.0 409.1 L200.3 408.2 L200.6 407.3 L201.0 406.4 L201.3 405.6 L201.6 404.7 L202.0 403.9 L202.3 403.0 L202.7 402.1 L203.2 401.1 L203.6 400.2 L204.0 399.3 L204.4 398.3 L204.8 397.4 L205.2 396.5 L205.6 395.6 L206.0 394.7 L206.3 393.8 L206.6 393.0 L206.8 392.2 L207.1 391.4 L207.3 390.7 L207.5 389.9 L207.7 389.2 L207.9 388.5 L208.1 387.9 L208.3 387.2 L208.5 386.5 L208.7 385.8 L208.7 380.6 L55.1 380.6Z" fill="#ff0000"/></svg>
</body></html>
